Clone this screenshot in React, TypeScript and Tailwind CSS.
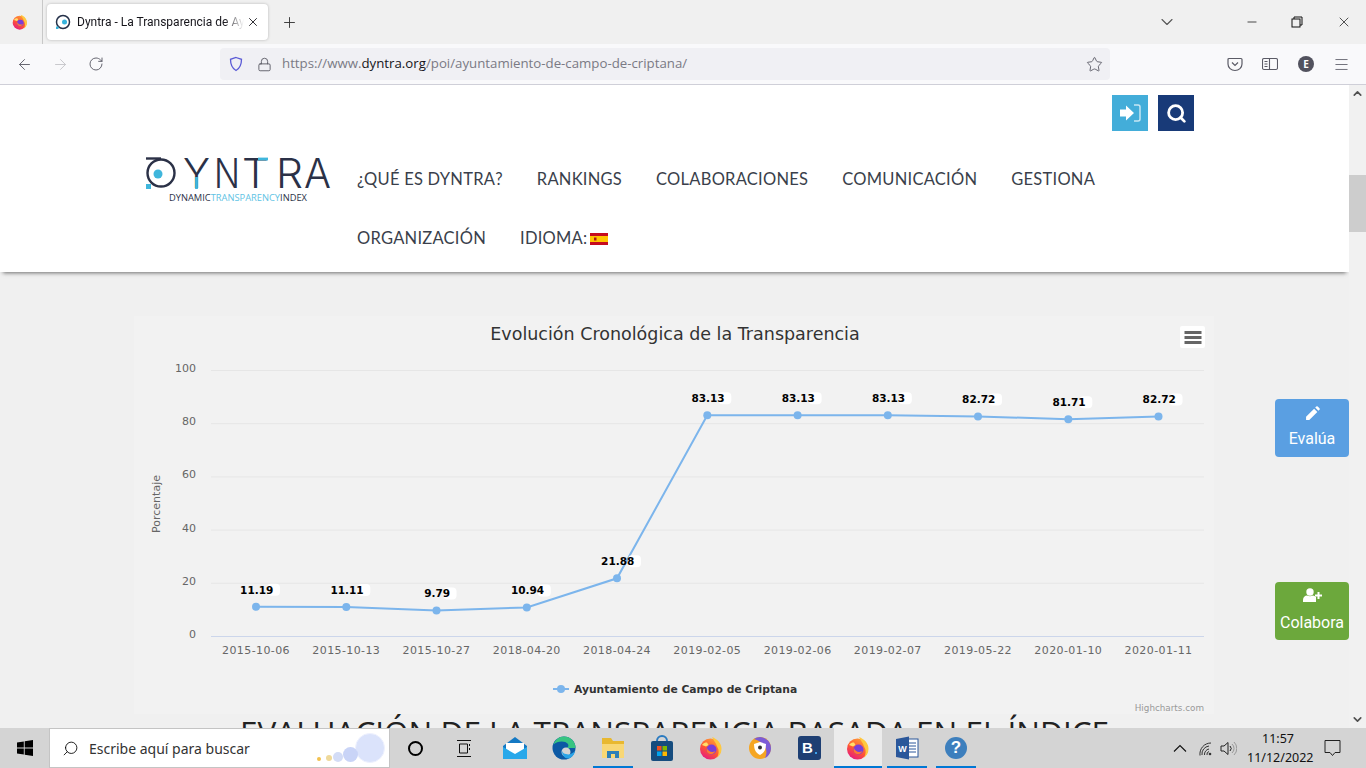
import React from "react";
import { ArrowLeft, ArrowRight, RotateCw, Lock, Star, X, Plus, ChevronDown, Minus, Menu, Search, ChevronUp } from "lucide-react";

const pts = [
  [256, 11.19], [346.3, 11.11], [436.5, 9.79], [526.8, 10.94], [617, 21.88], [707.3, 83.13], [797.6, 83.13], [887.8, 83.13], [978, 82.72], [1068.3, 81.71], [1158.5, 82.72],
] as const;
const dates = ["2015-10-06","2015-10-13","2015-10-27","2018-04-20","2018-04-24","2019-02-05","2019-02-06","2019-02-07","2019-05-22","2020-01-10","2020-01-11"];
const y = (v: number) => 636.5 - 2.66 * v;

function Firefox({ s = 24, id }: { s?: number; id: string }) {
  return (
    <svg width={s} height={s} viewBox="0 0 24 24">
      <defs>
        <linearGradient id={id} x1="0.8" y1="0" x2="0.2" y2="1">
          <stop offset="0" stopColor="#ffa436" />
          <stop offset="0.55" stopColor="#ff5634" />
          <stop offset="1" stopColor="#e31587" />
        </linearGradient>
      </defs>
      <circle cx="11.500" cy="13" r="10.500" fill={`url(#${id})`} />
      <path d="M13 1c5 2 9.500 6 9.500 12 0 4-2 7-5 9 2.500-3 3-8 .5-11.500C17 7 15 5 13 1z" fill="#ffc93f" />
      <circle cx="12.500" cy="13.500" r="5" fill="#7a3fd8" />
      <path d="M8 12c1 3.500 5 5 8.500 3-1 2.500-3.500 3.500-5.500 3-2.500-.5-4-3-3-6z" fill="#ff7a30" />
      <path d="M3 9c1.500-2 3-2.500 5-2.500L9.500 9 7 10.500z" fill="#ffdf6b" />
    </svg>
  );
}

function Chart() {
  return (
    <svg width="1080" height="398" viewBox="134 316 1080 398" className="block" style={{ fontFamily: "'DejaVu Sans', sans-serif" }}>
      <text x="675" y="340" textAnchor="middle" fontSize="17.500" fill="#333">Evolución Cronológica de la Transparencia</text>
      <rect x="1180" y="326" width="25" height="22" rx="2" fill="#fff" />
      <path d="M1184.500 332.500h17M1184.500 337.500h17M1184.500 342.500h17" stroke="#666" strokeWidth="3" />
      {[100, 80, 60, 40, 20, 0].map((v) => (
        <g key={v}>
          <line x1="211" x2="1204" y1={y(v)} y2={y(v)} stroke={v === 0 ? "#ccd6eb" : "#e6e6e6"} />
          <text x="196" y={y(v) + 1.500} textAnchor="end" fontSize="11" fill="#666">{v}</text>
        </g>
      ))}
      <text transform="translate(160 504) rotate(-90)" textAnchor="middle" fontSize="11" fill="#666">Porcentaje</text>
      {dates.map((d, i) => (
        <text key={d} x={pts[i][0]} y="654" textAnchor="middle" fontSize="11" letterSpacing="0.4" fill="#666">{d}</text>
      ))}
      <polyline points={pts.map(([x, v]) => `${x},${y(v)}`).join(" ")} fill="none" stroke="#7cb5ec" strokeWidth="2" />
      {pts.map(([x, v]) => <circle key={x} cx={x} cy={y(v)} r="4" fill="#7cb5ec" />)}
      {pts.map(([x, v]) => {
        const half = v < 10 ? 12 : 16;
        return (
          <g key={x}>
            <rect x={x + half - 5} y={y(v) - 23} width="13" height="12" rx="4" fill="#fff" />
            <text x={x + 0.700} y={y(v) - 13} fontSize="10.500" fontWeight="700" textAnchor="middle" fill="#000">{v}</text>
          </g>
        );
      })}
      <line x1="553" x2="569" y1="689" y2="689" stroke="#7cb5ec" strokeWidth="2" />
      <circle cx="561" cy="689" r="4" fill="#7cb5ec" />
      <text x="574" y="693" fontSize="10.750" fontWeight="700" fill="#333">Ayuntamiento de Campo de Criptana</text>
      <text x="1204" y="711" textAnchor="end" fontSize="8.800" fill="#999">Highcharts.com</text>
    </svg>
  );
}

function Logo() {
  const letters: [string, number, number][] = [["Y", 38, 27], ["N", 69, 26], ["T", 97, 27], ["R", 131, 27], ["A", 159, 27]];
  return (
    <div className="w-[186px] h-[46px] shrink-0">
      <svg width="186" height="46" viewBox="0 0 186 46">
        <circle cx="16" cy="16" r="13.500" fill="none" stroke="#2b3147" strokeWidth="2.400" />
        <path d="M1 1.500h15" stroke="#2b3147" strokeWidth="2.400" />
        <circle cx="13" cy="17" r="4.500" fill="#3fb6dc" />
        <rect x="1" y="27" width="5" height="5" fill="#3fb6dc" />
        {letters.map(([c, x, w]) => (
          <text key={c} x={x} y="31" fontSize="41" fontWeight="300" fill="#2b3147" textLength={w} lengthAdjust="spacingAndGlyphs" style={{ fontFamily: "Inter, sans-serif" }}>{c}</text>
        ))}
        <path d="M113 2h10" stroke="#3fb6dc" strokeWidth="2.800" />
        <path d="M51.500 20v12" stroke="#3fb6dc" strokeWidth="2.800" />
        <text x="24" y="44" fontSize="9" fill="#2b3147" textLength="138" lengthAdjust="spacingAndGlyphs" style={{ fontFamily: "'Open Sans', sans-serif" }}>
          DYNAMIC<tspan fill="#5fc3e4">TRANSPARENCY</tspan>INDEX
        </text>
      </svg>
    </div>
  );
}

function TaskIcon({ children, active, lit }: { children: React.ReactNode; active?: boolean; lit?: boolean }) {
  return (
    <div className={`relative w-[48px] h-[40px] flex items-center justify-center ${lit ? "bg-[#ececec]" : ""}`}>
      {children}
      {active && <div className={`absolute bottom-0 h-[2px] bg-[#0078d4] ${lit ? "inset-x-0" : "inset-x-[4px]"}`} />}
    </div>
  );
}

export default function App() {
  return (
    <div className="w-[1366px] h-[768px] overflow-hidden flex flex-col bg-white" style={{ fontFamily: "'Open Sans', sans-serif" }}>
      {/* Tab strip */}
      <div className="h-[44px] bg-[#f0f0f0] flex items-center shrink-0 text-[#15141a]">
        <div className="w-[32px] ml-[4px] flex justify-center"><Firefox s={16} id="ff0" /></div>
        <div className="w-px h-[44px] bg-[#c8c8c8] ml-[6px] mr-[4px]" />
        <div className="w-[221px] h-[36px] bg-white rounded shadow-[0_0_3px_rgba(0,0,0,0.25)] flex items-center pl-[8px] pr-[8px]">
          <svg width="16" height="16" viewBox="0 0 16 16" className="shrink-0">
            <circle cx="8" cy="8" r="6.500" fill="none" stroke="#26324a" strokeWidth="1.500" />
            <circle cx="9.500" cy="8" r="2.500" fill="#36b3dc" />
            <rect x="1" y="12.500" width="2.500" height="2.500" fill="#36b3dc" />
          </svg>
          <span className="ml-[6px] text-[12px] whitespace-nowrap overflow-hidden w-[168px] text-[#15141a] [mask-image:linear-gradient(to_right,black_88%,transparent)]" style={{ fontFamily: "Roboto, sans-serif" }}>Dyntra - La Transparencia de Ayuntamiento</span>
          <X size={14} strokeWidth={1.5} className="ml-[2px] shrink-0" />
        </div>
        <Plus size={17} strokeWidth={1.3} className="ml-[13px] text-[#333]" />
        <div className="flex-1" />
        <ChevronDown size={20} strokeWidth={1.3} className="text-[#555] mr-[68px]" />
        <Minus size={14} strokeWidth={1.2} className="mr-[32px] text-black" />
        <svg width="12" height="12" viewBox="0 0 12 12" className="mr-[33px]" fill="none" stroke="#111"><rect x="1" y="3" width="8" height="8" /><path d="M3 3V1h8v8H9" /></svg>
        <X size={16} strokeWidth={1} className="mr-[14px] text-black" />
      </div>
      {/* Nav bar */}
      <div className="h-[41px] bg-[#f9f9fb] border-b border-[#cfcfd8] flex items-center shrink-0 text-[#5b5b66]">
        <ArrowLeft size={17} strokeWidth={1.3} className="ml-[16px]" />
        <ArrowRight size={17} strokeWidth={1.3} className="ml-[19px] text-[#c4c4c8]" />
        <RotateCw size={16} strokeWidth={1.4} className="ml-[19px]" />
        <div className="ml-[116px] w-[890px] h-[32px] bg-[#f0f0f4] rounded flex items-center pl-[8px] pr-[7px]">
          <svg width="16" height="16" viewBox="0 0 16 16" fill="none" stroke="#5b5bd6" strokeWidth="1.300"><path d="M8 1.500l5.500 1.800c0 5-1.500 9-5.500 11.200C4 12.300 2.500 8.300 2.500 3.300z" /></svg>
          <Lock size={15} strokeWidth={1.4} className="ml-[13px] text-[#55555f]" />
          <span className="ml-[10px] text-[13.250px] text-[#7a7a84] whitespace-nowrap">https://www.<span className="text-[#15141a]">dyntra.org</span>/poi/ayuntamiento-de-campo-de-criptana/</span>
          <div className="flex-1" />
          <Star size={17} strokeWidth={1.3} />
        </div>
        <div className="flex-1" />
        <svg width="16" height="16" viewBox="0 0 16 16" fill="none" stroke="#5b5b66" strokeWidth="1.200" className="mr-[19px]"><path d="M2 2.500h12a1 1 0 0 1 1 1V8a7 6.500 0 0 1-14 0V3.500a1 1 0 0 1 1-1z" /><path d="M5 6.500l3 3 3-3" /></svg>
        <svg width="16" height="14" viewBox="0 0 16 14" fill="none" stroke="#5b5b66" strokeWidth="1.100" className="mr-[20px]"><rect x="0.500" y="1.500" width="15" height="11" rx="1.500" /><path d="M7.500 1.500v11M2.500 4.500h3M2.500 7h3M2.500 9.500h3" /></svg>
        <div className="w-[16px] h-[16px] rounded-full bg-[#52525e] text-white text-[10px] font-bold flex items-center justify-center mr-[19px]">E</div>
        <Menu size={17} strokeWidth={1.2} className="mr-[16px]" />
      </div>
      {/* Page */}
      <div className="flex-1 min-h-0 flex">
        <div className="relative w-[1349px] h-full overflow-hidden bg-[#f0f0f0]">
          <header className="relative z-10 h-[187px] bg-white shadow-[0_4px_4px_-3px_rgba(0,0,0,0.55)]">
            <div className="flex justify-end gap-[10px] pt-[10px] pr-[155px]">
              <div className="w-[36px] h-[36px] bg-[#43add9] flex items-center justify-center">
                <svg width="22" height="20" viewBox="0 0 22 20" fill="#fff"><path d="M1 6.500h6V2.500l8 7.500-8 7.500v-4H1z" /><path d="M15 2h4a2 2 0 0 1 2 2v12a2 2 0 0 1-2 2h-4" fill="none" stroke="#fff" strokeWidth="1.500" opacity=".7" /></svg>
              </div>
              <div className="w-[36px] h-[36px] bg-[#183a78] flex items-center justify-center">
                <Search size={21} strokeWidth={3.2} className="text-white" />
              </div>
            </div>
            <div className="flex pl-[145px] pt-[26px]">
              <Logo />
              <nav className="ml-[26px] -mt-[7px] text-[16.500px] tracking-[0.25px] text-[#3a3f4b]" style={{ fontFamily: "Lato, sans-serif" }}>
                <div className="flex gap-[34px] h-[59px] items-center">
                  <span>¿QUÉ ES DYNTRA?</span><span>RANKINGS</span><span>COLABORACIONES</span><span>COMUNICACIÓN</span><span>GESTIONA</span>
                </div>
                <div className="flex gap-[34px] h-[59px] items-center">
                  <span>ORGANIZACIÓN</span>
                  <span className="flex items-center gap-[3px]">IDIOMA:
                    <svg width="18" height="12" viewBox="0 0 18 12"><rect width="18" height="12" fill="#c60b1e" /><rect y="3" width="18" height="6" fill="#ffc400" /><rect x="4" y="4.500" width="2.500" height="3" fill="#ad1519" /></svg>
                  </span>
                </div>
              </nav>
            </div>
          </header>
          <main className="pt-[44px] flex flex-col items-center">
            <div className="w-[1080px] bg-[#f2f2f2] self-start ml-[134px]"><Chart /></div>
            <h2 className="mt-[2px] text-[31.500px] leading-none whitespace-nowrap text-[#222]">EVALUACIÓN DE LA TRANSPARENCIA BASADA EN EL ÍNDICE</h2>
          </main>
          <div className="absolute right-0 top-[314px] w-[74px] h-[58px] pt-[7px] rounded-[4px] bg-[#5a9fe2] text-white text-[16px] leading-[24px] flex flex-col items-center" style={{ fontFamily: "Roboto, sans-serif" }}>
            <svg width="15" height="15" viewBox="0 0 14 14" fill="#fff" className="shrink-0"><path d="M1 10l7.500-7.500 3 3L4 13H1zM9.500 1.500l1-1a1 1 0 0 1 1.400 0l1.600 1.600a1 1 0 0 1 0 1.400l-1 1z" /></svg>
            <span className="mt-[6px]">Evalúa</span>
          </div>
          <div className="absolute right-0 top-[497px] w-[74px] h-[58px] pt-[6px] rounded-[4px] bg-[#6ca83c] text-white text-[16px] leading-[24px] flex flex-col items-center" style={{ fontFamily: "Roboto, sans-serif" }}>
            <svg width="19" height="14" viewBox="0 0 19 14" fill="#fff" className="shrink-0"><circle cx="7" cy="4" r="3.700" /><path d="M0 14v-2c0-3 2-4.500 4-4.500 2 1 4 1 6 0 1 0 2 .5 3 1.500v5z" /><path d="M12 6.500h7v2h-7z" /><path d="M14.500 4h2v7h-2z" /></svg>
            <span className="mt-[9px]">Colabora</span>
          </div>
        </div>
        <div className="w-[17px] h-full bg-[#f1f1f1] relative">
          <ChevronUp size={13} strokeWidth={3} className="absolute top-[2px] left-[2px] text-[#505050]" />
          <div className="absolute top-[90px] w-full h-[57px] bg-[#cdcdcd]" />
          <ChevronDown size={13} strokeWidth={3} className="absolute bottom-[2px] left-[2px] text-[#505050]" />
        </div>
      </div>
      {/* Taskbar */}
      <div className="h-[40px] bg-[#d4d4d4] flex items-center shrink-0 text-black">
        <div className="w-[49px] flex justify-center">
          <svg width="16" height="16" viewBox="0 0 16 16" fill="#000"><path d="M0 2.500l6.800-1v6H0zM7.700 1.300L16 0v7.500H7.700zM0 8.500h6.800v6l-6.800-1zM7.700 8.500H16V16l-8.300-1.300z" /></svg>
        </div>
        <div className="w-[341px] h-[40px] bg-white border border-[#c4c4c4] flex items-center pl-[12px] relative">
          <Search size={17} strokeWidth={1.2} className="-scale-x-100" />
          <span className="ml-[10px] text-[14px] text-[#333]" style={{ fontFamily: "'Noto Sans', sans-serif" }}>Escribe aquí para buscar</span>
          <div className="absolute right-[4px] top-[4px] w-[30px] h-[30px] rounded-full bg-[#dbe3fb] border border-[#eef1fe]" />
          <div className="absolute right-[31px] top-[18px] w-[15px] h-[15px] rounded-full bg-[#c9d4f7]" />
          <div className="absolute right-[46px] top-[23px] w-[10px] h-[10px] rounded-full bg-[#d3dcf6]" />
          <div className="absolute right-[57px] top-[26px] w-[6px] h-[6px] rounded-full bg-[#efd99a]" />
          <div className="absolute right-[68px] top-[28px] w-[4px] h-[4px] rounded-full bg-[#f2c14e]" />
        </div>
        <div className="w-[51px] flex justify-center"><div className="w-[15px] h-[15px] rounded-full border-2 border-black" /></div>
        <div className="w-[45px] flex justify-center">
          <svg width="16" height="17" viewBox="0 0 16 17" fill="none" stroke="#111"><path d="M1 .5h14M1 16.500h14M3.500 4h8v9h-8zM13.500 4v2M13.500 8v2" /></svg>
        </div>
        <div className="ml-[5px] flex gap-[1px]">
          <TaskIcon>
            <svg width="24" height="24" viewBox="0 0 24 24"><path d="M12 1l12 9v13H0V10z" fill="#1479c4" /><path d="M3 7h18v8l-9 5-9-5z" fill="#fff" /><path d="M0 11l12 7 12-7v12H0z" fill="#28a8ea" /></svg>
          </TaskIcon>
          <TaskIcon>
            <svg width="24" height="24" viewBox="0 0 24 24"><circle cx="12" cy="12" r="11.500" fill="#0c59a4" /><path d="M23.500 12C23.500 5 18 .5 12 .5 7 .5 3 4 1.500 8.500 5 5 13 4 16 8c1 2 0 4-2 4h4c3 0 5.500 0 5.500 0z" fill="#37c481" /><circle cx="14" cy="16" r="4.500" fill="#d4d4d4" /><path d="M18 22c2-1 4.500-3.500 5-7-3 3-6 4-9 3-2 0-3-1-4-3 0 5 4 9 8 7z" fill="#2ba5e8" /></svg>
          </TaskIcon>
          <TaskIcon active>
            <svg width="24" height="24" viewBox="0 0 24 24"><path d="M1 2h9l2 3h11v4H1z" fill="#e8b830" /><path d="M1 8h22v14H1z" fill="#f8d775" /><path d="M6 15h12v7H6z" fill="#2d7fb8" /><path d="M10 18h4v4h-4z" fill="#f8d775" /></svg>
          </TaskIcon>
          <TaskIcon>
            <svg width="24" height="26" viewBox="0 0 24 26"><path d="M7 6a5 5 0 0 1 10 0" fill="none" stroke="#2a7ac0" strokeWidth="2" /><rect x="1" y="6" width="22" height="20" rx="2" fill="#164c7e" /><rect x="7" y="11" width="4.500" height="4.500" fill="#f25022" /><rect x="12.500" y="11" width="4.500" height="4.500" fill="#7fba00" /><rect x="7" y="16.500" width="4.500" height="4.500" fill="#00a4ef" /><rect x="12.500" y="16.500" width="4.500" height="4.500" fill="#ffb900" /></svg>
          </TaskIcon>
          <TaskIcon><Firefox s={24} id="ff1" /></TaskIcon>
          <TaskIcon>
            <svg width="24" height="24" viewBox="0 0 24 24"><circle cx="12" cy="12" r="11" fill="#f5a623" /><path d="M6 3a11 11 0 0 1 17 9c0 4-2 8-6 10 3-6 2-15-11-19z" fill="#7b5bd6" /><path d="M12 6l6 2c0 6-2 9-6 11-4-2-6-5-6-11z" fill="#fff" /><circle cx="12" cy="11.500" r="2" fill="#333" /></svg>
          </TaskIcon>
          <TaskIcon>
            <div className="relative w-[23px] h-[24px] rounded-[3px] bg-[#1e3f73] text-white text-[15px] font-bold flex items-center justify-center pr-[3px]" style={{ fontFamily: "'Liberation Sans', sans-serif" }}>
              B
              <div className="absolute right-[4px] bottom-[6px] w-[2px] h-[2px] bg-[#3fa0e8]" />
            </div>
          </TaskIcon>
          <TaskIcon active lit><Firefox s={24} id="ff2" /></TaskIcon>
          <TaskIcon active>
            <svg width="24" height="24" viewBox="0 0 24 24"><rect x="9" y="3" width="14" height="18" fill="#fff" stroke="#2b579a" /><path d="M14 7h7M14 10h7M14 13h7M14 16h7" stroke="#2b579a" /><path d="M1 3l13-2.500v23L1 21z" fill="#2b579a" /><text x="7.500" y="15.500" textAnchor="middle" fontSize="9" fontWeight="700" fill="#fff" style={{ fontFamily: "'Liberation Sans', sans-serif" }}>W</text></svg>
          </TaskIcon>
          <TaskIcon active>
            <div className="w-[22px] h-[22px] rounded-full bg-[#3d7fbd] text-white text-[17px] font-bold flex items-center justify-center" style={{ fontFamily: "'Liberation Sans', sans-serif" }}>?</div>
          </TaskIcon>
        </div>
        <div className="flex-1" />
        <svg width="14" height="8" viewBox="0 0 14 8" fill="none" stroke="#111" strokeWidth="1.100" className="mr-[11px]"><path d="M1 7.500l6-6 6 6" /></svg>
        <svg width="15" height="15" viewBox="0 0 15 15" fill="none" stroke="#333" strokeWidth="1" className="mr-[7px]"><path d="M4 14A8 8 0 0 1 11 5M6.500 14A5.500 5.500 0 0 1 11 8M9 14a3 3 0 0 1 2-3.500" /><path d="M2 14.500A11 11 0 0 1 13 2" /><circle cx="12" cy="13" r="1.300" fill="#333" stroke="none" /></svg>
        <svg width="17" height="15" viewBox="0 0 17 15" fill="none" stroke="#222" strokeWidth="1" className="mr-[10px]"><path d="M1 5h3l4-3.500v12L4 10H1z" /><path d="M10 5a3.500 3.500 0 0 1 0 5" /><path d="M12 3a6 6 0 0 1 0 9M14 1a9 9 0 0 1 0 13" stroke="#999" /></svg>
        <div className="w-[62px] text-center text-[12.500px] leading-[19px] text-[#111] -mt-[1px]" style={{ fontFamily: "'Noto Sans', sans-serif" }}>
          <div>11:57</div><div>11/12/2022</div>
        </div>
        <svg width="17" height="18" viewBox="0 0 17 18" fill="none" stroke="#222" className="ml-[15px] mr-[25px]"><path d="M1 1.500h15v12h-5l-2.500 3-2.500-3H1z" /></svg>
      </div>
    </div>
  );
}
